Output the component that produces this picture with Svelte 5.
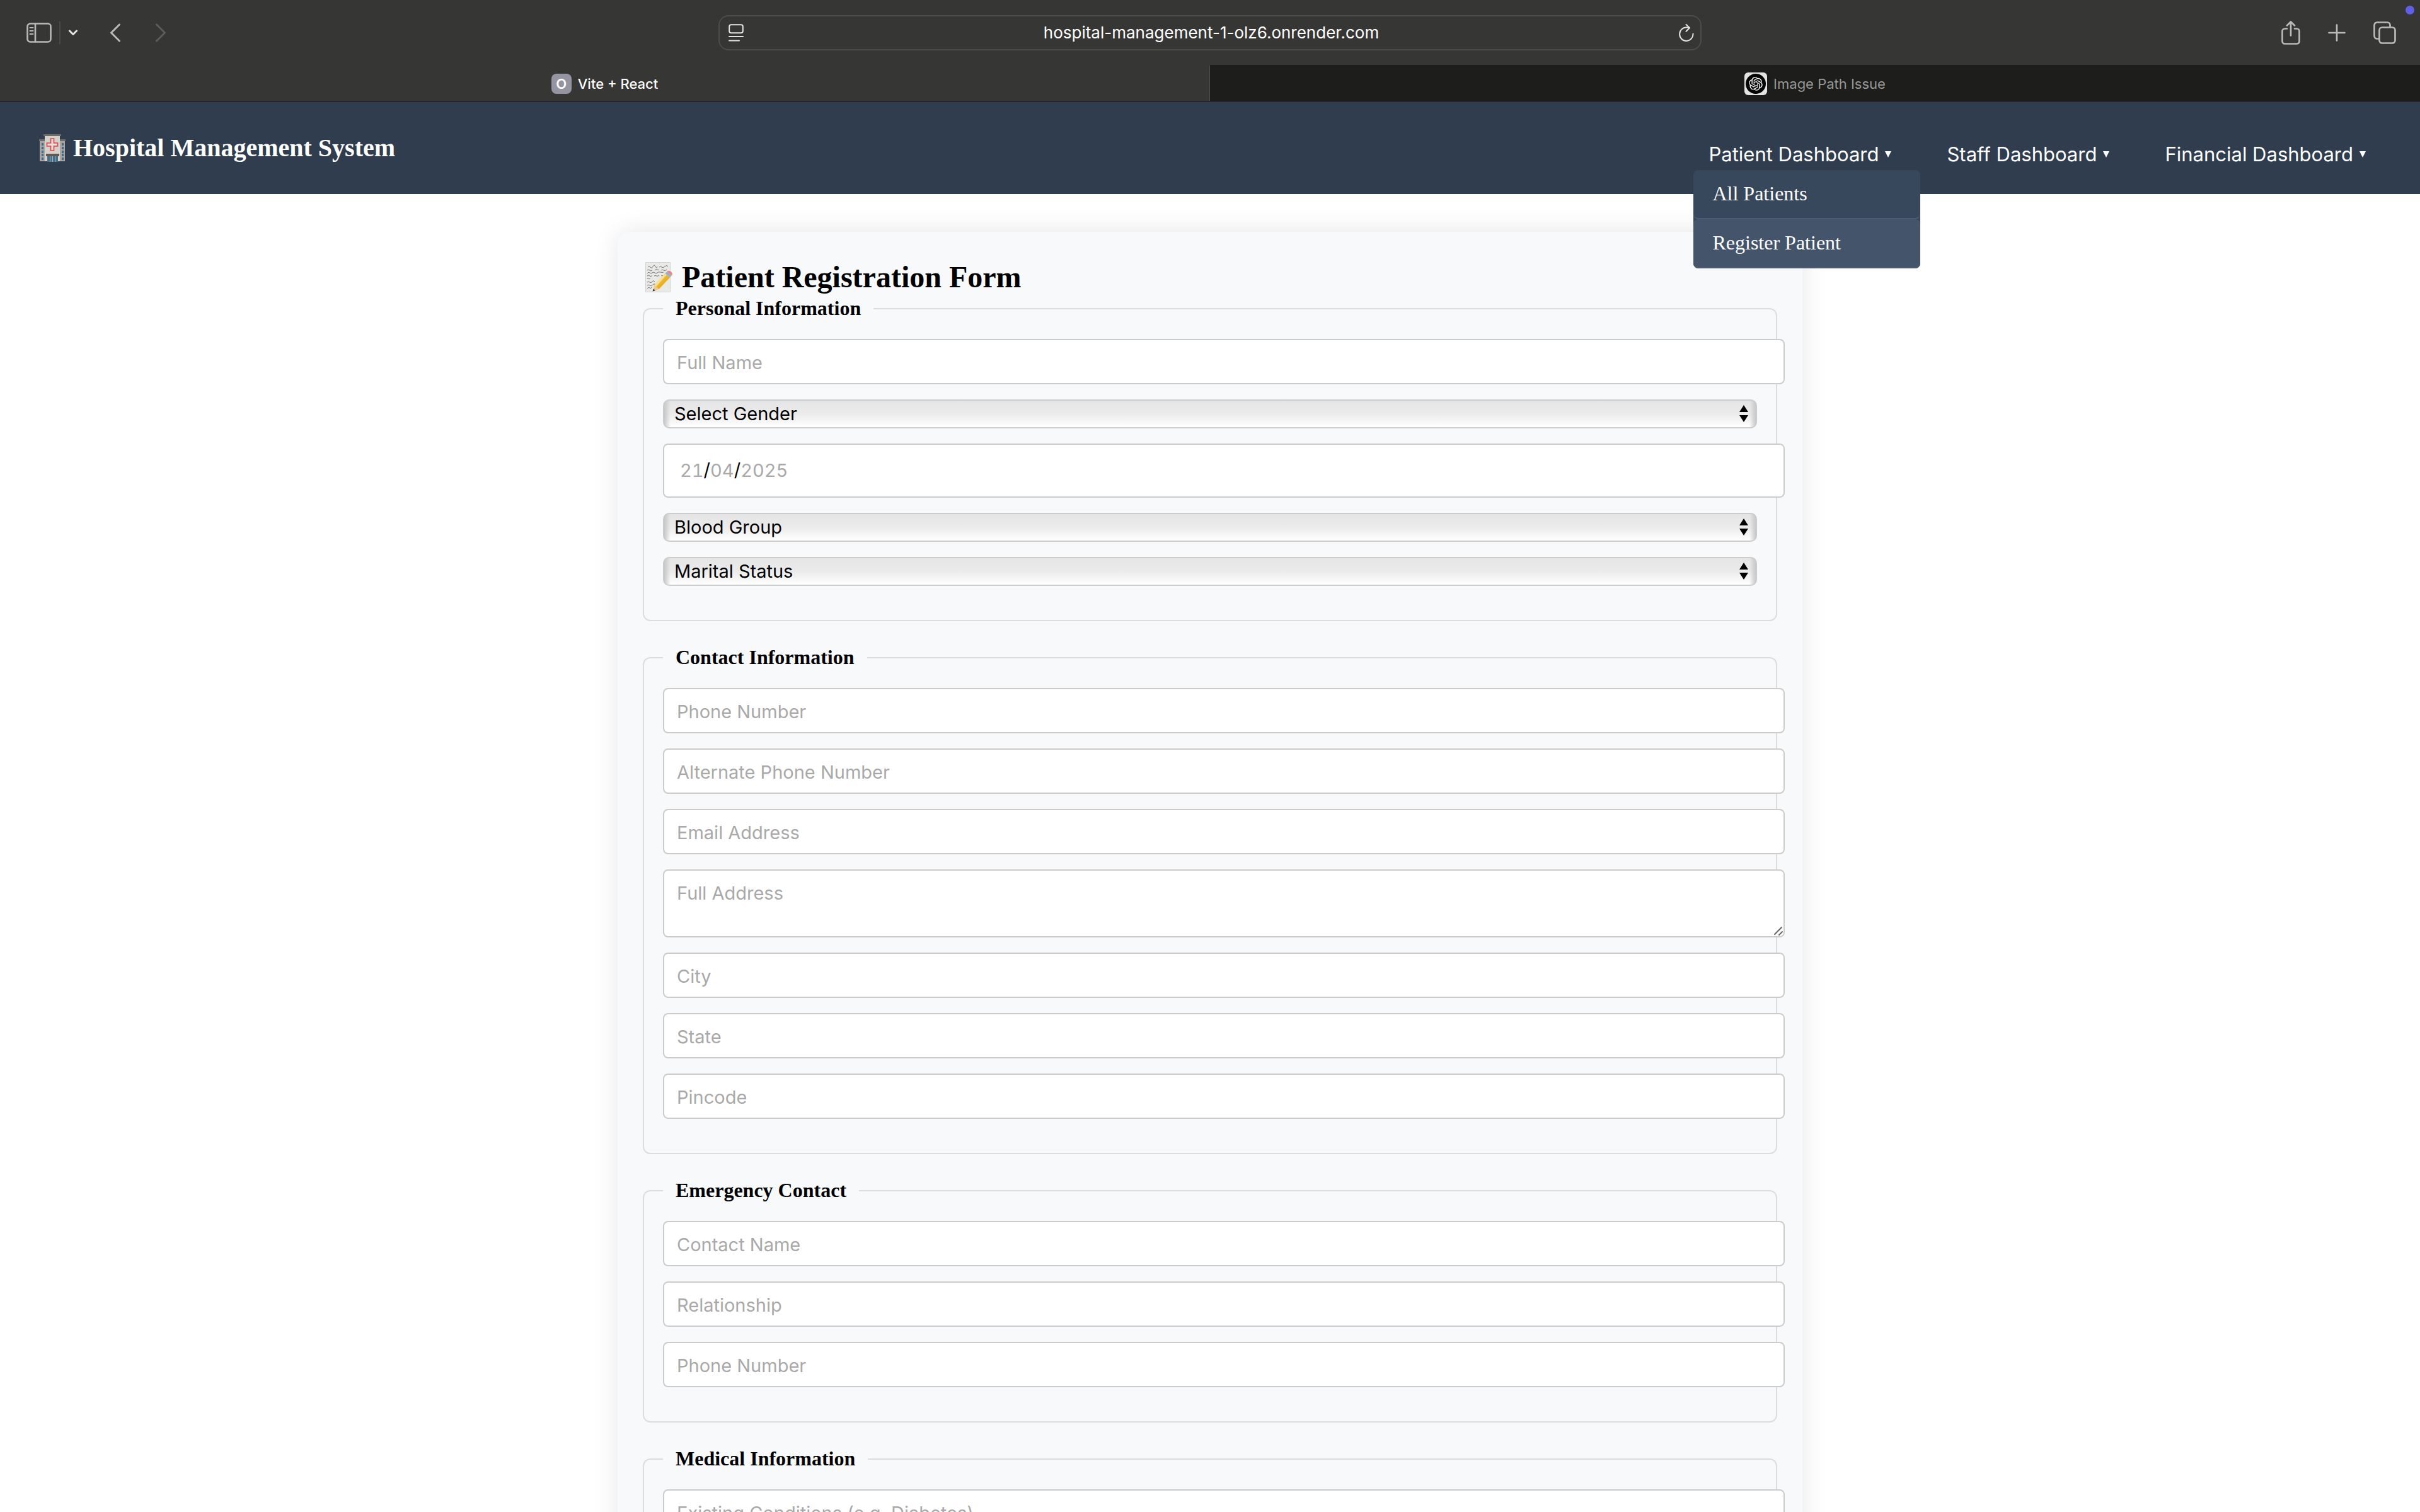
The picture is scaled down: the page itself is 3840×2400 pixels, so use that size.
<script>
  const menus = [
    { label: 'Patient Dashboard', items: ['All Patients', 'Register Patient'], open: true },
    { label: 'Staff Dashboard', items: [], open: false },
    { label: 'Financial Dashboard', items: [], open: false }
  ];

  const sections = [
    {
      title: 'Personal Information',
      fields: [
        { kind: 'text', label: 'Full Name' },
        { kind: 'select', label: 'Select Gender', options: ['Male', 'Female', 'Other'] },
        { kind: 'date', label: 'Date of Birth' },
        { kind: 'select', label: 'Blood Group', options: ['A+', 'A-', 'B+', 'B-', 'AB+', 'AB-', 'O+', 'O-'] },
        { kind: 'select', label: 'Marital Status', options: ['Single', 'Married'] }
      ]
    },
    {
      title: 'Contact Information',
      fields: [
        { kind: 'text', label: 'Phone Number' },
        { kind: 'text', label: 'Alternate Phone Number' },
        { kind: 'text', label: 'Email Address' },
        { kind: 'area', label: 'Full Address' },
        { kind: 'text', label: 'City' },
        { kind: 'text', label: 'State' },
        { kind: 'text', label: 'Pincode' }
      ]
    },
    {
      title: 'Emergency Contact',
      fields: [
        { kind: 'text', label: 'Contact Name' },
        { kind: 'text', label: 'Relationship' },
        { kind: 'text', label: 'Phone Number' }
      ]
    },
    {
      title: 'Medical Information',
      fields: [{ kind: 'text', label: 'Existing Conditions (e.g. Diabetes)' }]
    }
  ];
</script>

<div class="window">
  <div class="toolbar">
    <div class="tools left">
      <button class="icon sidebar" aria-label="Show sidebar">
        <svg width="40" height="32" viewBox="0 0 40 32" fill="none" stroke="currentColor" stroke-width="2.6">
          <rect x="1.5" y="1.5" width="37" height="29" rx="4.5" />
          <path d="M14 2v28" />
          <path d="M5.500 8h5M5.500 13h5M5.500 18h5" stroke-width="2" stroke-linecap="round" />
        </svg>
      </button>
      <span class="rule"></span>
      <button class="icon groups" aria-label="Tab groups">
        <svg width="16" height="10" viewBox="0 0 16 10" fill="none" stroke="currentColor" stroke-width="3" stroke-linecap="round" stroke-linejoin="round"><path d="M2.500 2l5.500 5.500L13.500 2" /></svg>
      </button>
      <button class="icon back" aria-label="Back">
        <svg width="18" height="30" viewBox="0 0 18 30" fill="none" stroke="currentColor" stroke-width="3" stroke-linecap="round" stroke-linejoin="round"><path d="M15.500 2L2.500 15l13 13" /></svg>
      </button>
      <button class="icon forward" aria-label="Forward" disabled>
        <svg width="18" height="30" viewBox="0 0 18 30" fill="none" stroke="currentColor" stroke-width="3" stroke-linecap="round" stroke-linejoin="round"><path d="M2.500 2l13 13-13 13" /></svg>
      </button>
    </div>
    <div class="address">
      <button class="icon bright" aria-label="Page menu">
        <svg width="24" height="28" viewBox="0 0 24 28" fill="none" stroke="currentColor" stroke-width="2"><rect x="1.200" y="1.200" width="21.600" height="13" rx="3" /><path d="M1 20h22M1 26.500h16" stroke-linecap="round" /></svg>
      </button>
      <input class="url" aria-label="Address" value="hospital-management-1-olz6.onrender.com" />
      <button class="icon bright" aria-label="Reload">
        <svg width="24" height="28" viewBox="0 0 24 28" fill="none" stroke="currentColor" stroke-width="2" stroke-linecap="round" stroke-linejoin="round"><path d="M22.500 15.500A10.700 10.700 0 1 1 12 5.500c1.800 0 3 .2 4.400.6" /><path d="M11.500 1l5.500 5.200-5.500 5.500" /></svg>
      </button>
    </div>
    <div class="tools right">
      <button class="icon" aria-label="Share">
        <svg width="30" height="38" viewBox="0 0 30 38" fill="none" stroke="currentColor" stroke-width="2.700" stroke-linecap="round" stroke-linejoin="round"><path d="M9 12.500H5.500a4 4 0 0 0-4 4v16a4 4 0 0 0 4 4h19a4 4 0 0 0 4-4v-16a4 4 0 0 0-4-4H21" /><path d="M15 23.500V2M9 7.500L15 1.500l6 6" /></svg>
      </button>
      <button class="icon" aria-label="New tab">
        <svg width="28" height="28" viewBox="0 0 28 28" fill="none" stroke="currentColor" stroke-width="2.700" stroke-linecap="round"><path d="M14 1.500v25M1.500 14h25" /></svg>
      </button>
      <button class="icon" aria-label="Tab overview">
        <svg width="36" height="36" viewBox="0 0 36 36" fill="none" stroke="currentColor" stroke-width="2.700" stroke-linejoin="round"><rect x="9.500" y="9.500" width="25" height="25" rx="4.500" /><path d="M9 27.500H6A4.500 4.500 0 0 1 1.500 23V6A4.500 4.500 0 0 1 6 1.500h16A4.500 4.500 0 0 1 26.500 6v3" /></svg>
      </button>
    </div>
    <span class="dot"></span>
  </div>

  <div class="tabs">
    <button class="tab active"><span class="favicon">O</span>Vite + React</button>
    <button class="tab">
      <svg width="36" height="36" viewBox="0 0 36 36">
        <rect width="36" height="36" rx="6" fill="#e4e4e2" />
        <circle cx="18" cy="18" r="16" fill="#050505" />
        <g transform="translate(7.200 7.200) scale(.9)"><path fill="#f4f4f4" d="M22.2819 9.8211a5.9847 5.9847 0 0 0-.5157-4.9108 6.0462 6.0462 0 0 0-6.5098-2.9A6.0651 6.0651 0 0 0 4.9807 4.1818a5.9847 5.9847 0 0 0-3.9977 2.9 6.0462 6.0462 0 0 0 .7427 7.0966 5.98 5.98 0 0 0 .511 4.9107 6.051 6.051 0 0 0 6.5146 2.9001A5.9847 5.9847 0 0 0 13.2599 24a6.0557 6.0557 0 0 0 5.7718-4.2058 5.9894 5.9894 0 0 0 3.9977-2.9001 6.0557 6.0557 0 0 0-.7475-7.0729zm-9.022 12.6081a4.4755 4.4755 0 0 1-2.8764-1.0408l.1419-.0804 4.7783-2.7582a.7948.7948 0 0 0 .3927-.6813v-6.7369l2.02 1.1686a.071.071 0 0 1 .038.052v5.5826a4.504 4.504 0 0 1-4.4945 4.4944zm-9.6607-4.1254a4.4708 4.4708 0 0 1-.5346-3.0137l.142.0852 4.783 2.7582a.7712.7712 0 0 0 .7806 0l5.8428-3.3685v2.3324a.0804.0804 0 0 1-.0332.0615L9.74 19.9502a4.4992 4.4992 0 0 1-6.1408-1.6464zM2.3408 7.8956a4.485 4.485 0 0 1 2.3655-1.9728V11.6a.7664.7664 0 0 0 .3879.6765l5.8144 3.3543-2.0201 1.1685a.0757.0757 0 0 1-.071 0l-4.8303-2.7865A4.504 4.504 0 0 1 2.3408 7.872zm16.5963 3.8558L13.1038 8.364 15.1192 7.2a.0757.0757 0 0 1 .071 0l4.8303 2.7913a4.4944 4.4944 0 0 1-.6765 8.1042v-5.6772a.79.79 0 0 0-.407-.667zm2.0107-3.0231l-.142-.0852-4.7735-2.7818a.7759.7759 0 0 0-.7854 0L9.409 9.2297V6.8974a.0662.0662 0 0 1 .0284-.0615l4.8303-2.7866a4.4992 4.4992 0 0 1 6.6802 4.66zM8.3065 12.863l-2.02-1.1638a.0804.0804 0 0 1-.038-.0567V6.0742a4.4992 4.4992 0 0 1 7.3757-3.4537l-.142.0805L8.704 5.459a.7948.7948 0 0 0-.3927.6813zm1.0976-2.3654l2.602-1.4998 2.6069 1.4998v2.9994l-2.5974 1.4997-2.6067-1.4997Z" /></g>
      </svg>
      Image Path Issue
    </button>
  </div>

  <header class="site">
    <h1>
      <svg width="42" height="44" viewBox="0 0 42 44">
        <path fill="#a9a49d" d="M1 10h9v33H1zM32 10h9v33h-9z" />
        <path fill="#6f6b66" d="M0 8h10v3H0zM32 8h10v3H32z" />
        <path fill="#3d6a8c" d="M4 14h3v4H4zM4 20h3v4H4zM4 26h3v4H4zM4 31h3v4H4zM4 37h3v4H4zM36 14h3v4h-3zM36 20h3v4h-3zM36 26h3v4h-3zM36 31h3v4h-3zM36 37h3v4h-3z" />
        <path fill="#d5d1cb" d="M9 2h24v41H9z" />
        <path fill="#6f6b66" d="M7 0h28v3H7z" />
        <path fill="#e9dcd8" stroke="#d94a4a" stroke-width="1.700" d="M18.500 7h5v7h6v5h-6v7h-5v-7h-6v-5h6z" />
        <path fill="#5d5a57" d="M11 31h21v4H11z" />
        <path fill="#456f88" d="M13 35h17v9H13z" />
        <path stroke="#9fb7c4" stroke-width="1" d="M17.500 35v9M21.500 35v9M25.500 35v9" />
      </svg>
      Hospital Management System
    </h1>
    <nav>
      {#each menus as menu}
        <div class="entry">
          <button class="trigger" aria-expanded={menu.open}>
            {menu.label}
            <svg width="10" height="10" viewBox="0 0 10 10"><path fill="currentColor" d="M0 0h10L5 10z" /></svg>
          </button>
          {#if menu.open}
            <div class="menu">
              {#each menu.items as item, i}
                <a href="#{item}" class:current={i === 1}>{item}</a>
              {/each}
            </div>
          {/if}
        </div>
      {/each}
    </nav>
  </header>

  <main>
    <form>
      <h2>
        <svg width="44" height="48" viewBox="0 0 44 48">
          <defs>
            <linearGradient id="pencil" x1="0" y1="0" x2="1" y2="1"><stop offset="0" stop-color="#fbd54a" /><stop offset="1" stop-color="#d99712" /></linearGradient>
          </defs>
          <path fill="#e9e9e7" stroke="#d2d2d0" d="M.500.500h39v47h-39z" />
          <g fill="none" stroke="#77777a" stroke-width="1">
            <path d="M4 8q2-3 4 0t4-1 4 0 3 0M22 8q2-2 4 0t5-1 5 0" />
            <path d="M3 13q2-2 4 0t4 0M15 13q2-2 4-1t3 0M25 13q2-2 4 0t5-1" />
            <path d="M3 18q2-3 4-1t4 0 4 0 4 0 5-1 5 0M3 22q2-2 4 0t4-1M14 22q2-1 4 0t4-1M25 22q2-2 3 0" />
            <path d="M3 27q1-2 3-1t2 0M3 32q2-2 4 0t4-1 4 0M3 37q2-2 4 0t5-1 3 0M3 42q2-3 4-1t3-1" />
          </g>
          <path fill="url(#pencil)" d="M14 37L31.500 18l7.500 6.500L21.500 43z" />
          <path fill="#fbe08a" d="M14 37L31.500 18l2.500 2L17 39z" />
          <path fill="#9cafc8" d="M31.500 18l2.700-3 7.300 6.500-2.500 3z" />
          <path fill="#e8878a" d="M34.200 15q3-2.500 6.300 0 4 3.200 1 6.500z" />
          <path fill="#ecc994" d="M14 37l7.500 6L12 46z" />
          <path fill="#35302c" d="M12.800 42.500l3.200 2.500-4.500 1.500z" />
        </svg>
        Patient Registration Form
      </h2>
      {#each sections as section}
        <fieldset>
          <legend>{section.title}</legend>
          {#each section.fields as field}
            {#if field.kind === 'text'}
              <input class="box" type="text" placeholder={field.label} aria-label={field.label} />
            {:else if field.kind === 'area'}
              <div class="area">
                <textarea class="box" rows="2" placeholder={field.label} aria-label={field.label}></textarea>
                <svg width="16" height="16" viewBox="0 0 16 16" stroke="#666" stroke-width="2" stroke-linecap="round"><path d="M2 13L13 2M9 14l5-5" /></svg>
              </div>
            {:else if field.kind === 'select'}
              <div class="pick">
                <select aria-label={field.label}>
                  <option>{field.label}</option>
                  {#each field.options as option}<option>{option}</option>{/each}
                </select>
                <svg width="14" height="28" viewBox="0 0 14 28"><path d="M7 0l7 11H0zM0 16h14L7 27z" /></svg>
              </div>
            {:else}
              <div class="box date" role="group" aria-label={field.label}>
                <input placeholder="21" aria-label="Day" />/<input placeholder="04" aria-label="Month" />/<input placeholder="2025" aria-label="Year" />
              </div>
            {/if}
          {/each}
        </fieldset>
      {/each}
    </form>
  </main>
</div>

<style>
  :global(body) {
    margin: 0;
    background: #fff;
  }
  .window {
    display: flex;
    flex-direction: column;
    height: 100vh;
    overflow: hidden;
    font-family: 'Liberation Serif', serif;
  }
  button {
    border: 0;
    background: none;
    padding: 0;
    color: inherit;
    font: inherit;
  }
  svg {
    display: block;
    flex: none;
  }

  .toolbar {
    position: relative;
    display: grid;
    grid-template-columns: 1fr minmax(0, 1560px) 1fr;
    align-items: center;
    flex: none;
    height: 104px;
    background: #363634;
    color: #b9b9b7;
  }
  .tools {
    display: flex;
    align-items: center;
    padding: 0 38px 0 42px;
  }
  .icon {
    display: flex;
  }
  .icon.bright {
    color: #e4e4e2;
  }
  .rule {
    width: 2px;
    height: 36px;
    margin: 0 12px;
    background: #484846;
  }
  .groups {
    color: #e4e4e2;
  }
  .back {
    margin-left: 50px;
  }
  .forward {
    margin-left: 54px;
    color: #5c5c5a;
  }
  .right {
    justify-content: flex-end;
    gap: 44px;
  }
  .address {
    box-sizing: border-box;
    display: flex;
    align-items: center;
    height: 56px;
    padding: 0 10px 0 14px;
    border: 2px solid #4c4c4a;
    border-radius: 16px;
  }
  .url {
    flex: 1;
    min-width: 0;
    padding: 0;
    border: 0;
    background: none;
    color: #fff;
    font: 26px/32px Inter, sans-serif;
    text-align: center;
  }
  .dot {
    position: absolute;
    top: 9px;
    right: 9px;
    width: 14px;
    height: 14px;
    border-radius: 50%;
    background: #625eea;
  }

  .tabs {
    display: grid;
    grid-template-columns: 1fr 1fr;
    flex: none;
    height: 56px;
    border-bottom: 1px solid #000;
    background: #363634;
  }
  .tab {
    display: flex;
    align-items: center;
    justify-content: center;
    gap: 10px;
    border-top: 1px solid #000;
    background: #1d1d1b;
    color: #989896;
    font: 22px/28px Inter, sans-serif;
  }
  .tab.active {
    border-top-color: transparent;
    border-right: 1px solid #50504e;
    background: none;
    color: #fff;
    font-weight: 500;
  }
  .favicon {
    width: 32px;
    border-radius: 8px;
    background: #9594a1;
    font-weight: 600;
    line-height: 32px;
    text-align: center;
  }

  .site {
    display: flex;
    align-items: center;
    justify-content: space-between;
    flex: none;
    height: 147px;
    padding: 0 62px;
    background: #303d4e;
    color: #fff;
  }
  h1 {
    display: flex;
    align-items: center;
    gap: 12px;
    margin: 0;
    font-size: 40px;
    line-height: 48px;
  }
  nav {
    display: flex;
    gap: 40px;
    padding-top: 20px;
  }
  .entry {
    position: relative;
  }
  .trigger {
    display: flex;
    align-items: center;
    gap: 10px;
    height: 50px;
    padding: 0 24px;
    font: 31px/40px Inter, sans-serif;
  }
  .menu {
    position: absolute;
    z-index: 1;
    top: 100%;
    left: 0;
    width: 360px;
    border-radius: 8px;
    background: #38485c;
  }
  .menu a {
    display: block;
    padding: 19px 30px 21px;
    border-bottom: 2px solid #4d5c70;
    border-radius: 8px;
    background: #38485c;
    color: #fff;
    font-size: 32px;
    line-height: 36px;
    text-decoration: none;
  }
  .menu a.current {
    background: #43546b;
  }

  main {
    flex: 1;
    min-height: 0;
    padding: 60px;
  }
  form {
    box-sizing: border-box;
    max-width: 1880px;
    margin: 0 auto;
    padding: 40px;
    border-radius: 20px;
    background: #f8f9fb;
    box-shadow: 0 0 40px rgba(0, 0, 0, 0.1);
  }
  h2 {
    display: flex;
    align-items: center;
    gap: 14px;
    margin: 0;
    padding-left: 4px;
    font-size: 48px;
    line-height: 64px;
  }
  fieldset {
    display: block;
    min-width: 0;
    margin: 0 0 40px;
    padding: 30px;
    border: 2px solid #dcdddf;
    border-radius: 12px;
    color: #000;
  }
  legend {
    padding: 0 20px 2px;
    font-size: 32px;
    font-weight: 700;
    line-height: 34px;
  }
  .box {
    display: block;
    width: 100%;
    margin: 0 0 24px;
    padding: 20px;
    border: 2px solid #ccc;
    border-radius: 8px;
    background: #fff;
    font: 29px/28px Inter, sans-serif;
  }
  input.box {
    height: 28px;
    padding: 21px 20px 19px;
  }
  ::placeholder {
    color: #a9a9a9;
    opacity: 1;
  }
  .area {
    display: grid;
    position: relative;
  }
  textarea.box {
    height: 64px;
    line-height: 32px;
    resize: none;
  }
  .area svg {
    position: absolute;
    right: -42px;
    bottom: 26px;
  }
  .date {
    display: flex;
    align-items: center;
    height: 42px;
    padding: 19px 15px 21px 25px;
  }
  .date input {
    field-sizing: content;
    padding: 0;
    border: 0;
    background: none;
    font: inherit;
    font-variant-numeric: tabular-nums;
  }
  .pick {
    display: grid;
    align-items: center;
    margin-bottom: 24px;
  }
  .pick > * {
    grid-area: 1 / 1;
  }
  .pick svg {
    justify-self: end;
    margin-right: 14px;
    pointer-events: none;
  }
  select {
    box-sizing: border-box;
    width: 100%;
    height: 46px;
    padding: 0 16px;
    border: 2px solid #ccc;
    border-radius: 10px;
    appearance: none;
    background:
      linear-gradient(90deg, #c8c8c8, transparent 10px, transparent calc(100% - 10px), #c8c8c8),
      linear-gradient(#e5e5e5, #ebebeb 50%, #fff);
    color: #000;
    font: 29px/36px Inter, sans-serif;
  }
</style>
